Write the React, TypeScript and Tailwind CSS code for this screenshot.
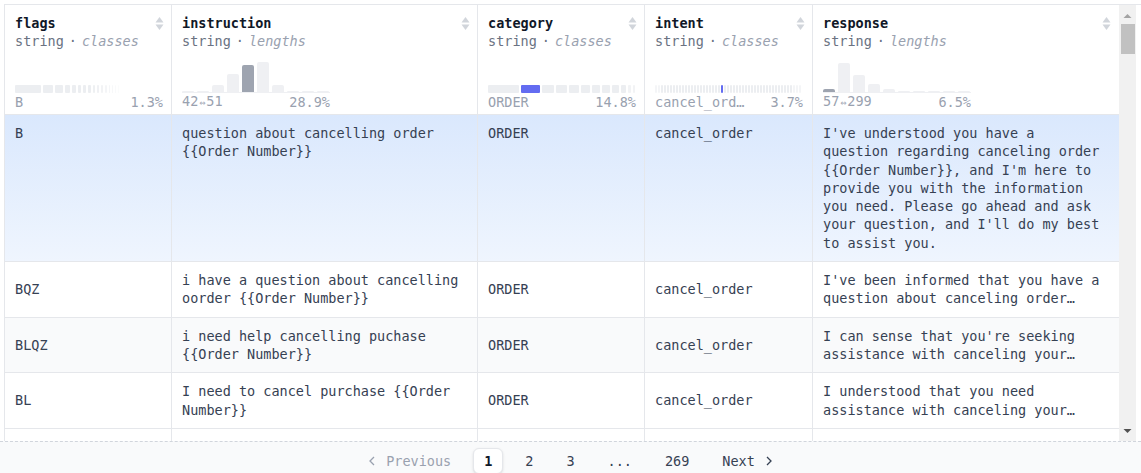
import React from "react";

type Seg = { w: number; hl?: "blue" | "gray"; o?: number };

const SortIcon = () => (
  <svg width="9" height="15" viewBox="0 0 9 15" className="shrink-0">
    <path d="M0.5 6.5 L4.5 1 L8.5 6.5 Z" fill="#d1d5db" />
    <path d="M0.5 8.5 L4.5 14 L8.5 8.5 Z" fill="#d1d5db" />
  </svg>
);

const Strip = ({ segs, gap }: { segs: Seg[]; gap: number }) => (
  <div className="flex h-[8px] w-[148px] items-stretch" style={{ gap }}>
    {segs.map((s, i) => (
      <div
        key={i}
        className={
          s.hl === "blue"
            ? "rounded-[1px] bg-[#636cf1]"
            : "rounded-[1px] bg-[#eceef1]"
        }
        style={{ width: s.w, opacity: s.o ?? 1 }}
      />
    ))}
  </div>
);

const Bars = ({ heights, hl }: { heights: number[]; hl: number }) => (
  <div className="flex w-[148px] flex-col">
    <div className="flex h-[30px] items-end gap-[3px]">
      {heights.map((h, i) => (
        <div
          key={i}
          className={
            i === hl
              ? "w-[12px] rounded-t-[2px] bg-[#9ea4b0]"
              : "w-[12px] rounded-t-[2px] bg-[#eff0f3]"
          }
          style={{ height: h }}
        />
      ))}
    </div>
    <div className="h-px w-full bg-[#eff0f3]" />
  </div>
);

interface HeaderProps {
  title: string;
  kind: string;
  className: string;
  chart: React.ReactNode;
  left: React.ReactNode;
  right: string;
}

const HeaderCell = ({ title, kind, className, chart, left, right }: HeaderProps) => (
  <div className={"flex flex-col pl-[10px] pr-[7px] pt-[9px] pb-[3px] " + className}>
    <div className="flex h-[18px] items-center justify-between">
      <span className="font-bold text-gray-900">{title}</span>
      <SortIcon />
    </div>
    <div className="h-[18px] leading-[18px] text-gray-500">
      string<span className="mx-[5px]">·</span>
      <span className="italic text-gray-400">{kind}</span>
    </div>
    <div className="mt-auto flex h-[31px] w-[148px] flex-col justify-end">{chart}</div>
    <div className="flex h-[18px] w-[148px] items-center justify-between text-gray-400">
      <span>{left}</span>
      <span>{right}</span>
    </div>
  </div>
);

const flagsSegs: Seg[] = [26, 10, 8, 5, 4, 3, 3, 3, 2, 2, 2, 2, 1, 1, 1, 1].map((w, i) => ({
  w,
  o: i < 8 ? 1 : 1 - (i - 7) * 0.1,
}));

const categorySegs: Seg[] = [31, 19, 12, 11, 10, 9, 8, 8, 7, 5, 3, 2].map((w, i) => ({
  w,
  hl: i === 1 ? "blue" : undefined,
  o: i > 9 ? 0.7 : 1,
}));

const intentSegs: Seg[] = Array.from({ length: 49 }, (_, i) => ({
  w: 2,
  hl: i === 22 ? "blue" : undefined,
  o: i < 2 || i > 45 ? 0.6 : 1,
}));

interface RowData {
  flags: string;
  instruction: string;
  category: string;
  intent: string;
  response: string;
}

const rows: RowData[] = [
  {
    flags: "B",
    instruction: "question about cancelling order {{Order Number}}",
    category: "ORDER",
    intent: "cancel_order",
    response:
      "I've understood you have a question regarding canceling order {{Order Number}}, and I'm here to provide you with the information you need. Please go ahead and ask your question, and I'll do my best to assist you.",
  },
  {
    flags: "BQZ",
    instruction: "i have a question about cancelling oorder {{Order Number}}",
    category: "ORDER",
    intent: "cancel_order",
    response: "I've been informed that you have a question about canceling order…",
  },
  {
    flags: "BLQZ",
    instruction: "i need help cancelling puchase {{Order Number}}",
    category: "ORDER",
    intent: "cancel_order",
    response: "I can sense that you're seeking assistance with canceling your…",
  },
  {
    flags: "BL",
    instruction: "I need to cancel purchase {{Order Number}}",
    category: "ORDER",
    intent: "cancel_order",
    response: "I understood that you need assistance with canceling your…",
  },
];

const Row = ({ r, expanded, bg }: { r: RowData; expanded?: boolean; bg: string }) => {
  const align = expanded ? "items-start" : "items-center";
  const cell = "flex py-[9px] pl-[10px] pr-[14px] " + align;
  return (
    <div className={"flex shrink-0 border-b border-gray-200 " + bg}>
      <div className={cell + " w-[166px]"}>{r.flags}</div>
      <div className={cell + " w-[306px] border-l border-gray-200"}>
        <span>{r.instruction}</span>
      </div>
      <div className={cell + " w-[167px] border-l border-gray-200"}>{r.category}</div>
      <div className={cell + " w-[168px] border-l border-gray-200"}>{r.intent}</div>
      <div className={cell + " w-[306px] border-l border-gray-200"}>
        <span>{r.response}</span>
      </div>
    </div>
  );
};

const Chevron = ({ dir }: { dir: "left" | "right" }) => (
  <svg width="6" height="10" viewBox="0 0 6 10" className="shrink-0">
    <path
      d={dir === "left" ? "M5 1 L1 5 L5 9" : "M1 1 L5 5 L1 9"}
      fill="none"
      stroke="currentColor"
      strokeWidth="1.3"
    />
  </svg>
);

export default function App() {
  return (
    <div className="flex h-[473px] w-[1141px] flex-col overflow-hidden bg-white font-['DejaVu_Sans_Mono','Liberation_Mono',monospace] text-[13.5px] leading-[18.3px] text-gray-700">
      <div className="ml-[4px] mt-[4px] flex h-[437px] shrink-0 border-l border-t border-gray-200">
        <div className="flex w-[1114px] shrink-0 flex-col overflow-hidden">
          <div className="flex h-[110px] shrink-0 border-b border-gray-200 bg-white">
            <HeaderCell
              title="flags"
              kind="classes"
              className="w-[166px]"
              chart={<Strip segs={flagsSegs} gap={2} />}
              left="B"
              right="1.3%"
            />
            <HeaderCell
              title="instruction"
              kind="lengths"
              className="w-[306px] border-l border-gray-200"
              chart={<Bars heights={[1.5, 1.5, 7, 18, 27, 30, 7, 1.5, 1.5, 1.5]} hl={4} />}
              left={
                <>
                  42<span className="inline-block w-[8px] text-center text-[10px]">⇔</span>51
                </>
              }
              right="28.9%"
            />
            <HeaderCell
              title="category"
              kind="classes"
              className="w-[167px] border-l border-gray-200"
              chart={<Strip segs={categorySegs} gap={2} />}
              left="ORDER"
              right="14.8%"
            />
            <HeaderCell
              title="intent"
              kind="classes"
              className="w-[168px] border-l border-gray-200"
              chart={<Strip segs={intentSegs} gap={1} />}
              left="cancel_ord…"
              right="3.7%"
            />
            <HeaderCell
              title="response"
              kind="lengths"
              className="w-[306px] border-l border-gray-200"
              chart={<Bars heights={[3.5, 29, 17, 8, 3, 1, 1, 1, 1, 1]} hl={0} />}
              left={
                <>
                  57<span className="inline-block w-[8px] text-center text-[10px]">⇔</span>299
                </>
              }
              right="6.5%"
            />
          </div>

          <Row r={rows[0]} expanded bg="bg-linear-to-b from-[#dae8fd] to-[#eff5fe]" />
          <Row r={rows[1]} bg="bg-white" />
          <Row r={rows[2]} bg="bg-gray-50" />
          <Row r={rows[3]} bg="bg-white" />
          <div className="flex h-[40px] shrink-0 bg-white">
            <div className="w-[166px]" />
            <div className="w-[306px] border-l border-gray-200" />
            <div className="w-[167px] border-l border-gray-200" />
            <div className="w-[168px] border-l border-gray-200" />
            <div className="w-[306px] border-l border-gray-200" />
          </div>
        </div>

        <div className="flex w-[17px] shrink-0 flex-col items-center bg-[#f1f1f1]">
          <svg width="9" height="6" viewBox="0 0 9 6" className="mt-[8px]">
            <path d="M0.5 5 L4.5 1 L8.5 5 Z" fill="#a3a3a3" />
          </svg>
          <div className="mt-[5px] h-[30px] w-[14px] bg-[#c1c1c1]" />
          <svg width="9" height="6" viewBox="0 0 9 6" className="mb-[7px] mt-auto">
            <path d="M0.5 1 L4.5 5 L8.5 1 Z" fill="#505050" />
          </svg>
        </div>
        <div className="flex-1 bg-white" />
      </div>

      <div className="flex flex-1 items-start justify-center gap-[11px] border-t border-dashed border-gray-300 bg-gray-50 pt-[6px]">
        <div className="flex items-center gap-[11px] border border-transparent px-[10px] py-[3px] text-gray-400">
          <Chevron dir="left" />
          <span>Previous</span>
        </div>
        <div className="rounded-md border border-gray-200 bg-white px-[10px] py-[3px] font-bold text-gray-900 shadow-sm">
          1
        </div>
        <div className="border border-transparent px-[10px] py-[3px] text-gray-700">2</div>
        <div className="border border-transparent px-[10px] py-[3px] text-gray-700">3</div>
        <div className="border border-transparent px-[10px] py-[3px] text-gray-700">...</div>
        <div className="border border-transparent px-[10px] py-[3px] text-gray-700">269</div>
        <div className="flex items-center gap-[11px] border border-transparent px-[10px] py-[3px] text-gray-700">
          <span>Next</span>
          <Chevron dir="right" />
        </div>
      </div>
    </div>
  );
}
